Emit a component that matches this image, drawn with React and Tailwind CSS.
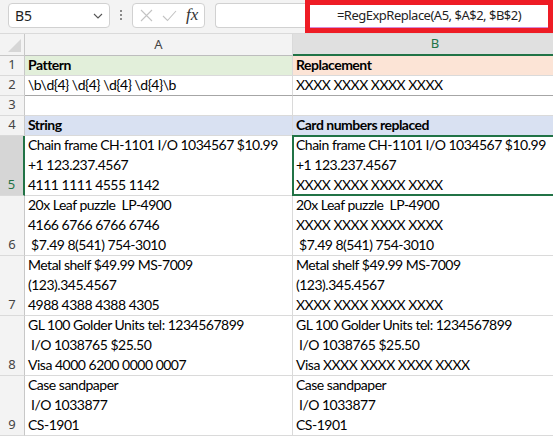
import React from "react";

const rows = [
  { n: 1, h: "h-5", a: ["Pattern"], b: ["Replacement"], bold: true, bgA: "bg-[#e2efda]", bgB: "bg-[#fce4d6]" },
  { n: 2, h: "h-5", a: ["\\b\\d{4} \\d{4} \\d{4} \\d{4}\\b"], b: ["XXXX XXXX XXXX XXXX"], line: true },
  { n: 3, h: "h-5", a: [""], b: [""] },
  { n: 4, h: "h-5", a: ["String"], b: ["Card numbers replaced"], bold: true, bgA: "bg-[#d9e1f2]", bgB: "bg-[#d9e1f2]" },
  {
    n: 5,
    h: "h-[60px]",
    sel: true,
    a: ["Chain frame CH-1101 I/O 1034567 $10.99", "+1 123.237.4567", "4111 1111 4555 1142"],
    b: ["Chain frame CH-1101 I/O 1034567 $10.99", "+1 123.237.4567", "XXXX XXXX XXXX XXXX"],
  },
  {
    n: 6,
    h: "h-[60px]",
    a: ["20x Leaf puzzle  LP-4900", "4166 6766 6766 6746", " $7.49 8(541) 754-3010"],
    b: ["20x Leaf puzzle  LP-4900", "XXXX XXXX XXXX XXXX", " $7.49 8(541) 754-3010"],
  },
  {
    n: 7,
    h: "h-[60px]",
    a: ["Metal shelf $49.99 MS-7009", "(123).345.4567", "4988 4388 4388 4305"],
    b: ["Metal shelf $49.99 MS-7009", "(123).345.4567", "XXXX XXXX XXXX XXXX"],
  },
  {
    n: 8,
    h: "h-[60px]",
    a: ["GL 100 Golder Units tel: 1234567899", " I/O 1038765 $25.50", "Visa 4000 6200 0000 0007"],
    b: ["GL 100 Golder Units tel: 1234567899", " I/O 1038765 $25.50", "Visa XXXX XXXX XXXX XXXX"],
  },
  {
    n: 9,
    h: "h-[60px]",
    a: ["Case sandpaper", " I/O 1033877", "CS-1901"],
    b: ["Case sandpaper", " I/O 1033877", "CS-1901"],
  },
];

const Cell = ({ lines, bold, bg, line, sel, w }) => (
  <div
    className={`relative ${w} shrink-0 flex flex-col justify-end border-r border-b ${
      line ? "border-b-[#a6a6a6]" : "border-b-[#dadada]"
    } border-r-[#dadada] ${bg || "bg-white"} pl-[3px]`}
  >
    {lines.map((t, i) => (
      <div
        key={i}
        className={`h-5 leading-5 whitespace-pre text-[14px] tracking-[-0.5px] text-black ${bold ? "font-bold" : ""}`}
      >
        {t}
      </div>
    ))}
    {sel && <div className="absolute -left-px -top-px -right-px -bottom-px border-2 border-[#217346]" />}
  </div>
);

const App = () => {
  return (
    <div
      className="w-[553px] h-[436px] overflow-hidden bg-[#f3f3f3] flex flex-col"
      style={{ fontFamily: "Lato, 'Liberation Sans', sans-serif" }}
    >
      {/* formula bar */}
      <div className="relative h-[33px] shrink-0 flex items-start pt-[3px] pl-2 gap-[10px] font-['Noto_Sans',sans-serif]">
        <div className="w-[102px] h-[25px] bg-white border border-[#d1d1d1] rounded-[4px] flex items-center justify-between pl-[6px] pr-[5px]">
          <span className="text-[14px] text-[#1f1f1f]">B5</span>
          <svg width="12" height="12" viewBox="0 0 12 12" fill="none" stroke="#555" strokeWidth="1.1">
            <path d="M2 4l4 4 4-4" />
          </svg>
        </div>
        <div className="flex flex-col gap-[2px] pt-[7px]">
          <div className="w-[2px] h-[2px] bg-[#8a8a8a]" />
          <div className="w-[2px] h-[2px] bg-[#8a8a8a]" />
          <div className="w-[2px] h-[2px] bg-[#8a8a8a]" />
        </div>
        <div className="w-[73px] h-[25px] bg-white border border-[#d1d1d1] rounded-[4px] flex items-center pl-[7px] gap-[9px]">
          <svg width="13" height="13" viewBox="0 0 13 13" fill="none" stroke="#c3c3c3" strokeWidth="1.1">
            <path d="M1 1l11 11M12 1L1 12" />
          </svg>
          <svg width="15" height="12" viewBox="0 0 15 12" fill="none" stroke="#c3c3c3" strokeWidth="1.1">
            <path d="M1 6l4.5 4.5L14 1" />
          </svg>
          <span className="text-[17px] italic text-[#333] font-['Liberation_Serif',serif] leading-none -mt-[2px]">fx</span>
        </div>
        <div className="flex-1 h-[25px] bg-white border border-[#d1d1d1] rounded-l-[4px] border-r-0" />
        <div className="absolute left-[305px] top-0 w-[248px] h-[33px] border-[5px] border-[#ee1c25] bg-white flex items-center justify-center">
          <span className="text-[13px] tracking-[-0.5px] text-[#1f1f1f] whitespace-pre -mt-px">
            =RegExpReplace(A5, $A$2, $B$2)
          </span>
          <div className="absolute left-0 right-0 bottom-0 h-px bg-[#d58ad8]" />
        </div>
      </div>

      {/* column headers */}
      <div className="h-[23px] shrink-0 flex border-t border-[#dadada] font-['Noto_Sans',sans-serif] text-[13px]">
        <div className="w-[25px] shrink-0 bg-[#f3f3f3] border-r border-b border-[#c8c8c8] relative">
          <div className="absolute right-[3px] bottom-[3px] w-0 h-0 border-l-[13px] border-l-transparent border-b-[13px] border-b-[#d6d6d6]" />
        </div>
        <div className="w-[268px] shrink-0 bg-[#f3f3f3] border-r border-b border-r-[#dadada] border-b-[#bdbdbd] flex items-center justify-center text-[#444]">
          A
        </div>
        <div className="w-[284px] shrink-0 bg-[#e0e0e0] border-b-2 border-[#217346] flex items-center justify-center text-[#217346]">
          B
        </div>
      </div>

      {/* rows */}
      {rows.map((r) => (
        <div key={r.n} className={`flex ${r.h} shrink-0`}>
          <div
            className={`w-[25px] shrink-0 flex items-end justify-center pb-[1px] text-[13px] font-['Noto_Sans',sans-serif] leading-5 border-b border-[#dadada] ${
              r.sel
                ? "bg-[#d6d6d6] text-[#217346] border-r-2 border-r-[#217346]"
                : "bg-[#f3f3f3] text-[#444] border-r border-r-[#c8c8c8]"
            }`}
          >
            {r.n}
          </div>
          <Cell w="w-[268px]" lines={r.a} bold={r.bold} bg={r.bgA} line={r.line} />
          <Cell w="w-[284px]" lines={r.b} bold={r.bold} bg={r.bgB} line={r.line} sel={r.sel} />
        </div>
      ))}
    </div>
  );
};

export default App;
